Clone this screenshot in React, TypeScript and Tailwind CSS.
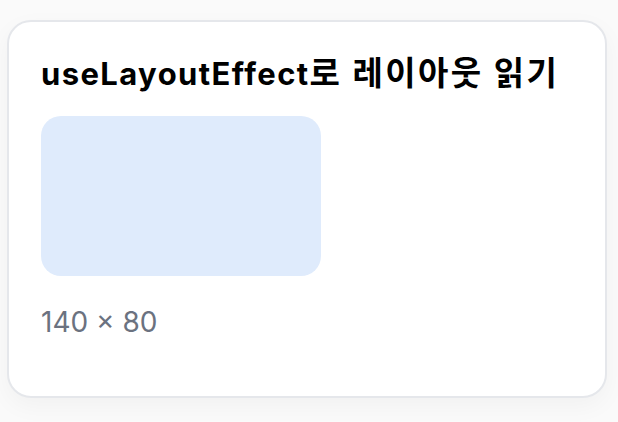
export default function App() {
  return (
    <div className="min-h-[422px] bg-[#fafafa] pt-5 pl-[7px]" style={{ fontFamily: "Inter, 'Noto Sans CJK KR', sans-serif" }}>
      <div className="flex h-[378px] w-[600px] flex-col rounded-[24px] border-2 border-[#e5e7eb] bg-white px-8 pt-[33px] shadow-[0_8px_24px_rgba(0,0,0,0.04)]">
        <h2 className="whitespace-nowrap text-[31px] font-bold leading-[36px] tracking-[1.4px] text-black">
          useLayoutEffect
          <span className="text-[33px] tracking-[2.4px]">로 레이아웃 읽기</span>
        </h2>
        <div className="mt-6 h-[160px] w-[280px] rounded-[20px] bg-[#dfebfc]" />
        <p className="mt-7 text-[28px] leading-[36px] text-[#6b7280]">140 × 80</p>
      </div>
    </div>
  );
}
